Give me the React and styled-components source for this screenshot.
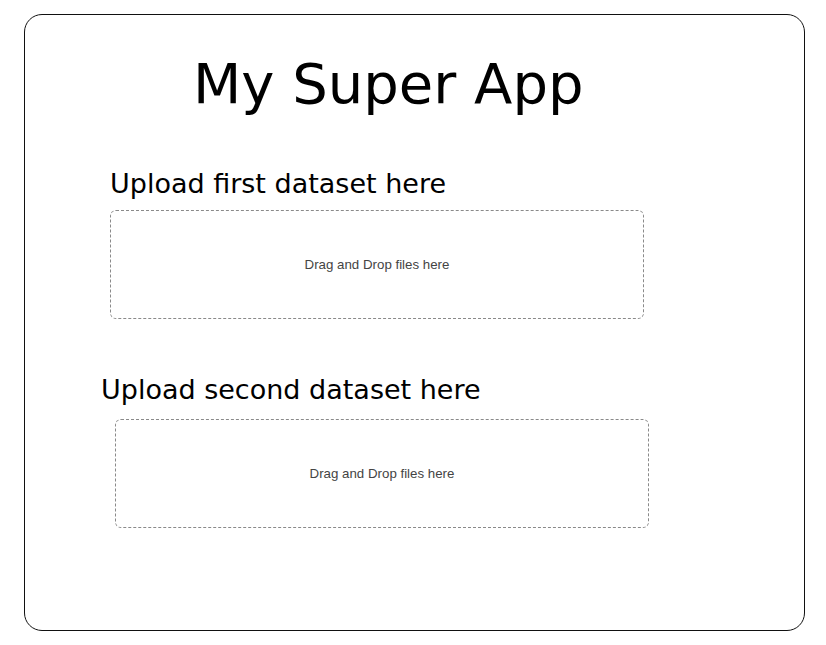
import React from "react"
import styled, { createGlobalStyle } from "styled-components"

const GlobalStyle = createGlobalStyle`
  body {
    margin: 0;
    background: #fff;
    font-family: "DejaVu Sans", sans-serif;
  }
`

const Card = styled.div`
  box-sizing: border-box;
  margin: 14px 0 0 24px;
  width: 781px;
  height: 617px;
  border: 1.5px solid #111;
  border-radius: 18px;
  display: flex;
  flex-direction: column;
`

const Title = styled.h1`
  margin: 41px 0 0 168px;
  font-family: "DejaVu Sans", sans-serif;
  font-weight: normal;
  font-size: 56px;
  line-height: 56px;
  color: #000;
`

const Section = styled.section`
  display: flex;
  flex-direction: column;
  margin: ${(p) => p.$top}px 0 0 0;
`

const Label = styled.h2`
  margin: 0 0 0 ${(p) => p.$left}px;
  font-family: "DejaVu Sans", sans-serif;
  font-weight: normal;
  font-size: 27px;
  line-height: 32px;
  color: #000;
`

const DropZone = styled.div`
  box-sizing: border-box;
  margin: ${(p) => p.$gap}px 0 0 ${(p) => p.$left}px;
  width: 534px;
  height: 109px;
  border: 1px dashed #8a8a8a;
  border-radius: 6px;
  display: flex;
  align-items: center;
  justify-content: center;
  font-family: "Liberation Sans", Arial, sans-serif;
  font-size: 13.3px;
  color: #444;
`

export default function App() {
  return (
    <>
      <GlobalStyle />
      <Card>
        <Title>My Super App</Title>
        <Section $top={56}>
          <Label $left={85}>Upload first dataset here</Label>
          <DropZone $left={85} $gap={10}>Drag and Drop files here</DropZone>
        </Section>
        <Section $top={55}>
          <Label $left={76}>Upload second dataset here</Label>
          <DropZone $left={90} $gap={13}>Drag and Drop files here</DropZone>
        </Section>
      </Card>
    </>
  )
}
